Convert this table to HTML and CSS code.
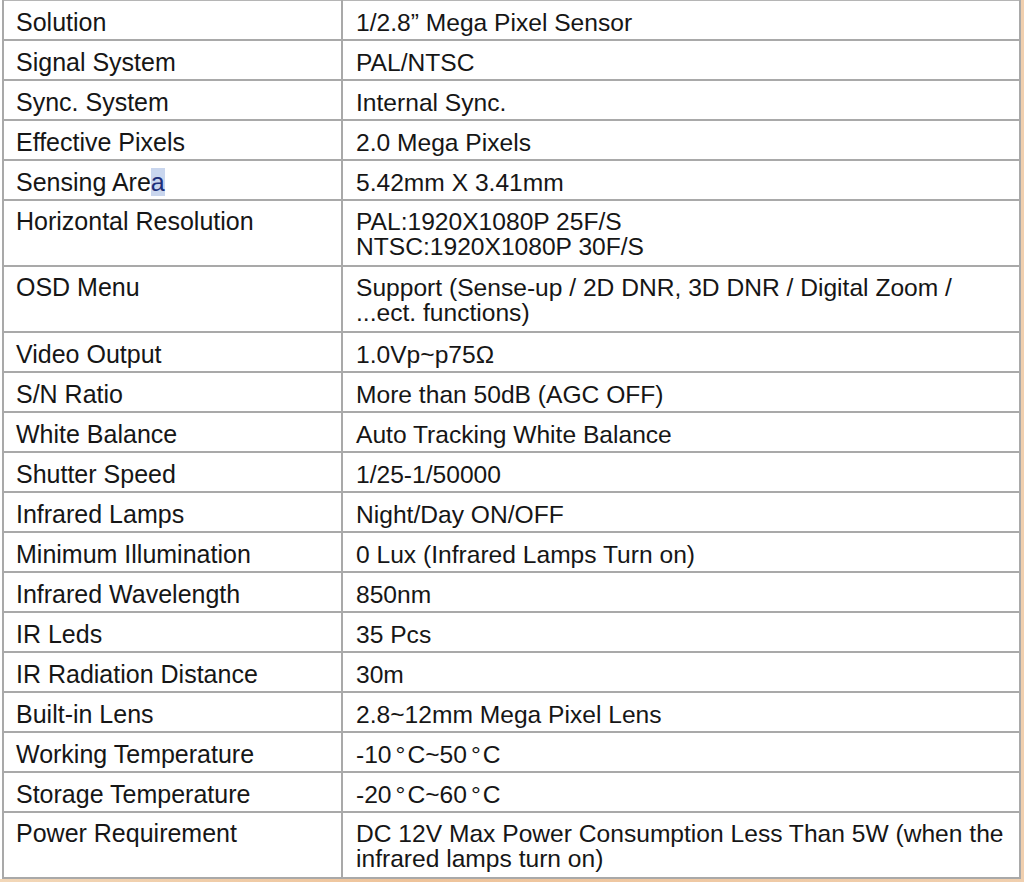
FILE: index.html
```html
<!DOCTYPE html>
<html>
<head>
<meta charset="utf-8">
<link rel="stylesheet" href="styles.css">
</head>
<body>
<div class="page">
<table class="spec">
<colgroup><col class="ck"><col class="cv"></colgroup>
<tr><td class="k">Solution</td><td class="v">1/2.8” Mega Pixel Sensor</td></tr>
<tr><td class="k">Signal System</td><td class="v">PAL/NTSC</td></tr>
<tr><td class="k">Sync. System</td><td class="v">Internal Sync.</td></tr>
<tr><td class="k">Effective Pixels</td><td class="v">2.0 Mega Pixels</td></tr>
<tr><td class="k">Sensing Are<span class="sel">a</span></td><td class="v">5.42mm X 3.41mm</td></tr>
<tr class="two"><td class="k">Horizontal Resolution</td><td class="v">PAL:1920X1080P 25F/S<br>NTSC:1920X1080P 30F/S</td></tr>
<tr class="two"><td class="k">OSD Menu</td><td class="v">Support (Sense-up / 2D DNR, 3D DNR / Digital Zoom /<br>...ect. functions)</td></tr>
<tr><td class="k">Video Output</td><td class="v">1.0Vp~p75Ω</td></tr>
<tr><td class="k">S/N Ratio</td><td class="v">More than 50dB (AGC OFF)</td></tr>
<tr><td class="k">White Balance</td><td class="v">Auto Tracking White Balance</td></tr>
<tr><td class="k">Shutter Speed</td><td class="v">1/25-1/50000</td></tr>
<tr><td class="k">Infrared Lamps</td><td class="v">Night/Day ON/OFF</td></tr>
<tr><td class="k">Minimum Illumination</td><td class="v">0 Lux (Infrared Lamps Turn on)</td></tr>
<tr><td class="k">Infrared Wavelength</td><td class="v">850nm</td></tr>
<tr><td class="k">IR Leds</td><td class="v">35 Pcs</td></tr>
<tr><td class="k">IR Radiation Distance</td><td class="v">30m</td></tr>
<tr><td class="k">Built-in Lens</td><td class="v">2.8~12mm Mega Pixel Lens</td></tr>
<tr><td class="k">Working Temperature</td><td class="v">-10<span class="deg">°</span>C~50<span class="deg">°</span>C</td></tr>
<tr><td class="k">Storage Temperature</td><td class="v">-20<span class="deg">°</span>C~60<span class="deg">°</span>C</td></tr>
<tr class="two"><td class="k">Power Requirement</td><td class="v">DC 12V Max Power Consumption Less Than 5W (when the<br>infrared lamps turn on)</td></tr>
</table>
</div>
</body>
</html>
```
FILE: styles.css
```css
html, body {
  margin: 0;
  padding: 0;
}
body {
  width: 1024px;
  height: 882px;
  overflow: hidden;
  background: linear-gradient(90deg, #f2d7b8 0%, #eec39a 40%, #f0cfae 100%);
}
.page {
  width: 1021px;
  padding: 0 2px 0 2px;
  box-sizing: border-box;
  background: linear-gradient(90deg, #ffffff 0%, #ffffff 99.6%, #efe4c4 99.6%);
}
.spec {
  width: 1019px;
  table-layout: fixed;
  border-collapse: collapse;
  font-family: "Liberation Sans", Arial, sans-serif;
  font-size: 25px;
  color: #161616;
  background: #ffffff;
}
.ck {
  width: 339px;
}
.spec td {
  border: 2px solid #a9a9a9;
  padding: 9px 12px 4px 12px;
  line-height: 25px;
  height: 25px;
  vertical-align: top;
  white-space: nowrap;
  overflow: visible;
}
.spec tr:first-child td {
  border-top: 1px solid #b5b5b5;
}
.spec .two td {
  padding-top: 8px;
  padding-bottom: 6px;
}
.spec .v {
  padding-left: 13px;
  font-size: 24.6px;
}
.deg {
  margin: 0 2px 0 4px;
}
.sel {
  background: #c9d6ee;
  color: #1d2f7a;
}
```
